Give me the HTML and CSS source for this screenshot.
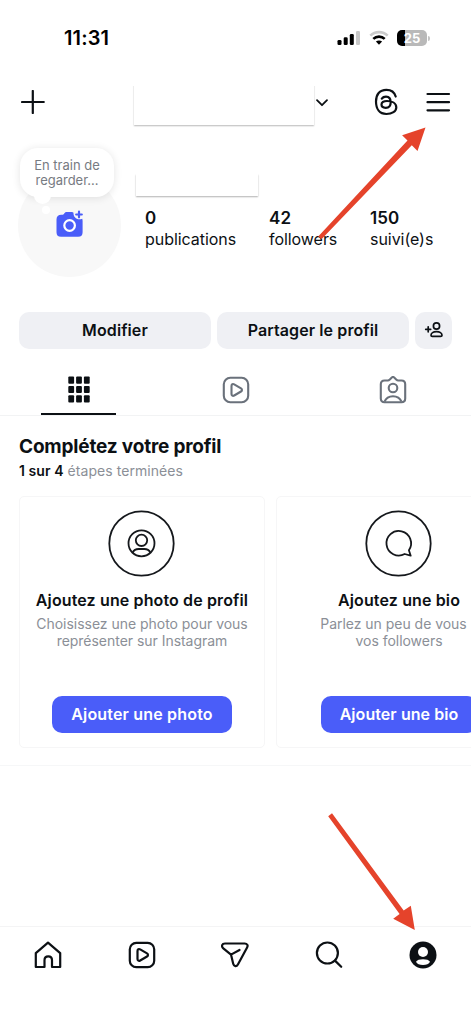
FILE: index.html
```html
<!DOCTYPE html>
<html lang="fr">
<head>
<meta charset="utf-8">
<title>Profil</title>
<link rel="stylesheet" href="styles.css">
</head>
<body>
<div class="screen">
  <div class="status">
    <span class="time">11:31</span>
    <svg class="signal" width="24" height="16" viewBox="0 0 24 16"><rect x="0.5" y="10" width="4" height="5" rx="1.3"/><rect x="6.7" y="7.2" width="4" height="7.8" rx="1.3"/><rect x="12.8" y="4" width="4" height="11" rx="1.3"/><rect x="19" y="1" width="4" height="14" rx="1.3" fill="#c8c8c8"/></svg>
    <svg class="wifi" width="20" height="16" viewBox="0 0 20 16" fill="none" stroke-width="2.6"><path d="M1.3 5.6C6.2.9 13.8.9 18.7 5.6" stroke="#cbcbcb"/><path d="M4.3 8.9c3.2-3.1 8.2-3.1 11.4 0" stroke="#000"/><path d="M6.9 11.6c1.7-1.6 4.5-1.6 6.2 0L10 14.8z" fill="#000"/></svg>
    <div class="battery"><span>25</span></div><i class="battery-tip"></i>
  </div>

  <header class="topbar">
    <svg class="plus" width="24" height="24" viewBox="0 0 24 24" fill="none" stroke="#0c1014" stroke-width="2.2" stroke-linecap="round"><path d="M11.800 1v22M1 12h21.800"/></svg>
    <div class="account"></div>
    <svg class="chevron" width="14" height="10" viewBox="0 0 14 10" fill="none" stroke="#0c1014" stroke-width="1.8" stroke-linecap="round" stroke-linejoin="round"><path d="M2 2.2l5 5 5-5"/></svg>
    <svg class="threads" width="24" height="28" viewBox="0 0 24 28" fill="none" stroke="#0c1014" stroke-width="2.2" stroke-linecap="round"><path d="M21.7 8.5C20.4 4 17.2 1.8 12.4 1.8 5.6 1.8 2 6.2 2 13.6S5.600 26 12.400 26c5.700 0 9.900-2.800 9.900-6.500 0-4.300-4.300-6.500-9.300-6.500-3.600 0-5.500 1.500-5.500 3.600 0 2 1.700 3.200 4.200 3.200 3.500 0 5-2.300 5-5.600 0-3.500-1.500-5.600-4.700-5.600-1.900 0-3.300.7-4.200 2"/></svg>
    <svg class="menu" width="26" height="22" viewBox="0 0 26 22" stroke="#0c1014" stroke-width="2.200" stroke-linecap="round"><path d="M2.500 3h21.500M2.500 11.200h21.500M2.500 19.300h21.500"/></svg>
  </header>

  <section class="profile">
    <div class="avatar">
      <svg class="camera" width="28" height="28" viewBox="0 0 28 28"><path fill="#4a5df9" d="M5.300 4.700h1.400c.8 0 1.200-.4 1.500-1.100C8.700 2.500 9.500 2 10.700 2h5.100c.8 0 1.300.2 1.700.7-.3 3.600 2.300 6.500 6 6.600.9 0 1.800-.1 2.700-.5.300.6.400 1.300.4 2.100v11.300c0 3-1.500 4.500-4.500 4.500H5c-3 0-4.500-1.500-4.500-4.500V9.400c0-3.100 1.700-4.700 4.800-4.700z"/><circle cx="13.600" cy="15.500" r="5.300" fill="none" stroke="#fff" stroke-width="2.200"/><path d="M23 1.700v5.600M20.200 4.500h5.600" stroke="#4a5df9" stroke-width="2.200" stroke-linecap="round"/></svg>
      <div class="note">En train de<br>regarder...</div>
    </div>
    <div class="details">
      <div class="name"></div>
      <div class="stats">
        <div class="stat"><b>0</b><span>publications</span></div>
        <div class="stat"><b>42</b><span>followers</span></div>
        <div class="stat"><b>150</b><span>suivi(e)s</span></div>
      </div>
    </div>
  </section>

  <div class="actions">
    <div class="btn edit">Modifier</div>
    <div class="btn share">Partager le profil</div>
    <div class="btn add"><svg width="20" height="18" viewBox="0 0 20 18" fill="none" stroke="#0c1014" stroke-width="1.700" stroke-linecap="round"><circle cx="12.500" cy="5" r="3.100"/><path d="M12.500 10.700c-3.300 0-5.500 1.400-5.500 3.500 0 .8.500 1.200 1.300 1.200h8.400c.8 0 1.300-.4 1.300-1.200 0-2.100-2.200-3.500-5.500-3.500zM4.200 5.800v5M1.700 8.300h5"/></svg></div>
  </div>

  <nav class="tabs">
    <div class="tab active"><svg width="22" height="27" viewBox="0 0 22 27" fill="#0c1014"><g id="row"><rect x=".3" y=".5" width="5.800" height="7.200" rx="1"/><rect x="8.100" y=".5" width="5.800" height="7.200" rx="1"/><rect x="15.900" y=".5" width="5.800" height="7.200" rx="1"/></g><use href="#row" y="9.400"/><use href="#row" y="18.800"/></svg></div>
    <div class="tab"><svg width="28" height="28" viewBox="0 0 28 28" fill="none" stroke="#6a717b" stroke-width="2.100" stroke-linejoin="round"><rect x="1.800" y="1.800" width="24.400" height="24.400" rx="6.500"/><path d="M9.500 10c0-1.700 1.300-2.400 2.700-1.600l6.800 4c1.300.8 1.300 2.300 0 3.100l-6.800 4c-1.400.8-2.700.1-2.700-1.500z"/></svg></div>
    <div class="tab"><svg width="28" height="28" viewBox="0 0 28 28" fill="none" stroke="#6a717b" stroke-width="2.100" stroke-linejoin="round"><path d="M5.500 4.500h3.300c.8 0 1.300-.2 1.800-.8l2.200-2.100c.7-.7 1.700-.7 2.400 0l2.200 2.100c.5.600 1 .8 1.800.8h3.300c2.400 0 3.700 1.300 3.700 3.700v14.300c0 2.400-1.300 3.700-3.700 3.700h-17c-2.400 0-3.700-1.300-3.700-3.700V8.200c0-2.400 1.300-3.700 3.700-3.700z"/><circle cx="14" cy="12" r="4.300"/><path d="M5.500 25.600c1.500-3.600 4.600-5.400 8.500-5.400s7 1.800 8.500 5.400"/></svg></div>
  </nav>

  <section class="complete">
    <h2>Complétez votre profil</h2>
    <p class="progress"><b>1 sur 4</b> <span>étapes terminées</span></p>
    <div class="cards">
      <article class="card">
        <svg class="round" width="67" height="67" viewBox="0 0 67 67" fill="none" stroke="#15181c" stroke-width="1.800"><circle cx="33.500" cy="33.500" r="32.200"/><circle cx="33.500" cy="33.300" r="13"/><circle cx="33.500" cy="30.300" r="5.700"/><path d="M24.600 42.600c1.200-2.500 3.300-3.600 6.100-3.600h5.600c2.800 0 4.900 1.100 6.100 3.600"/></svg>
        <h3 class="title photo-title">Ajoutez une photo de profil</h3>
        <p class="desc">Choisissez une photo pour vous<br>représenter sur Instagram</p>
        <div class="cta photo-cta">Ajouter une photo</div>
      </article>
      <article class="card">
        <svg class="round" width="67" height="67" viewBox="0 0 67 67" fill="none" stroke="#15181c" stroke-width="1.800" stroke-linejoin="round"><circle cx="33.500" cy="33.500" r="32.200"/><path d="M43.900 40.200a12.300 12.300 0 1 0-4.200 3.800l6 1.700z"/></svg>
        <h3 class="title">Ajoutez une bio</h3>
        <p class="desc"><span class="line">Parlez un peu de vous</span>vos followers</p>
        <div class="cta">Ajouter une bio</div>
      </article>
    </div>
  </section>

  <nav class="bottom">
    <div><svg width="28" height="28" viewBox="0 0 28 28" fill="none" stroke="#0c1014" stroke-width="2.200" stroke-linejoin="round"><path d="M1.800 12.200L14 1.600l12.200 10.600V26H18v-6.700c0-5.200-7.500-5.200-7.500 0V26H1.800z"/></svg></div>
    <div><svg width="28" height="28" viewBox="0 0 28 28" fill="none" stroke="#0c1014" stroke-width="2.200" stroke-linejoin="round"><rect x="1.800" y="1.800" width="24.400" height="24.400" rx="6.500"/><path d="M9.500 10c0-1.700 1.300-2.400 2.700-1.600l6.800 4c1.300.8 1.300 2.300 0 3.100l-6.800 4c-1.400.8-2.700.1-2.700-1.500z"/></svg></div>
    <div><svg width="28" height="28" viewBox="0 0 28 28" fill="none" stroke="#0c1014" stroke-width="2.200" stroke-linejoin="round" stroke-linecap="round"><path d="M4 2.500h19.700c2.500 0 3.600 1.900 2.400 4l-9.200 17c-1.400 2.400-4 2.100-4.700-.7L10 13.600 2.300 7.300C0 5.400 1 2.500 4 2.500zM10 13.600l8.500-4.600"/></svg></div>
    <div><svg width="28" height="28" viewBox="0 0 28 28" fill="none" stroke="#0c1014" stroke-width="2.200" stroke-linecap="round"><circle cx="12.400" cy="12" r="10.500"/><path d="M20 19.600l6.200 6.200"/></svg></div>
    <div><svg width="28" height="28" viewBox="0 0 28 28"><circle cx="14" cy="14" r="13.500" fill="#0c1014"/><circle cx="14" cy="11" r="5" fill="#fff"/><path fill="#fff" d="M7 20.700c1-1.700 3.500-2.500 7-2.500s6 .8 7 2.500c-1 2.400-3.600 3.300-7 3.300s-6-.9-7-3.300z"/></svg></div>
  </nav>

  <svg class="arrows" width="471" height="1024" viewBox="0 0 471 1024" fill="#e5432b"><path d="M318.200 236.500L407.500 140.500 402.100 135.200 425.500 127.500 417.500 151 411.800 145.300 321.700 239z"/><path d="M332 813.200L403.700 910.600 410.800 905.700 414.800 930 393.200 918.800 399.600 913.900 328.200 816.200z"/></svg>
</div>
</body>
</html>
```

FILE: styles.css
```css
* { box-sizing: border-box; }
body { margin: 0; background: #fff; color: #0c1014; font-family: Inter, "Noto Sans", sans-serif; }
h2, h3, p { margin: 0; }
svg { display: block; flex: none; }
.screen { position: relative; width: 471px; height: 1024px; overflow: hidden; display: flex; flex-direction: column; }

.status { height: 76px; flex: none; display: flex; align-items: center; padding-left: 64px; }
.time { width: 273px; font-size: 20px; font-weight: 600; color: #000; letter-spacing: .15px; }
.wifi { margin-left: 8px; }
.battery { margin-left: 8px; width: 30px; height: 16px; border-radius: 5px; background: linear-gradient(90deg, #000 8px, #b9b9b9 8px); color: #fff; font-size: 13px; font-weight: 700; line-height: 16px; text-align: center; letter-spacing: .1px; }
.battery-tip { width: 2px; height: 5px; margin-left: 1px; border-radius: 0 2px 2px 0; background: #c4c4c4; }

.topbar { height: 52px; flex: none; display: flex; align-items: center; padding-left: 21px; }
.account { width: 180px; height: 41px; margin: 5px 0 0 89px; background: #fff; box-shadow: 0 1px 1.500px rgba(0,0,0,.28); clip-path: inset(2px -2px -4px -2px); }
.chevron { margin: 1px 0 0 1px; }
.threads { margin-left: 45px; }
.menu { margin-left: 27px; }

.profile { height: 184px; flex: none; display: flex; padding: 46px 0 0 18px; }
.avatar { position: relative; width: 103px; height: 103px; border-radius: 50%; background: #f8f8f8; }
.camera { margin: 36px 0 0 38px; }
.note { position: absolute; left: 2px; top: -26px; width: 94px; height: 49px; border-radius: 18px; background: #fff; box-shadow: 0 1px 8px rgba(0,0,0,.11); padding-top: 10px; text-align: center; font-size: 13px; line-height: 15px; color: #777b82; }
.note::before { content: ""; position: absolute; left: 14px; top: 39px; width: 17px; height: 17px; border-radius: 50%; background: #fff; clip-path: inset(9px 0 0 0); }
.note::after { content: ""; position: absolute; left: 22px; top: 58px; width: 8px; height: 8px; border-radius: 50%; background: #fff; }
.details { margin-left: 15px; }
.name { width: 122px; height: 22px; background: #fff; box-shadow: 0 1px 1.500px rgba(0,0,0,.3); clip-path: inset(0 -2px -4px -2px); }
.stats { display: flex; padding: 12px 0 0 9px; }
.stat { display: flex; flex-direction: column; font-size: 16px; line-height: 21px; letter-spacing: -.05px; }
.stat:nth-child(1) { width: 124px; }
.stat:nth-child(2) { width: 101px; }
.stat b { font-size: 17px; font-weight: 600; letter-spacing: .1px; }

.actions { display: flex; gap: 6px; padding-left: 19px; flex: none; }
.btn { height: 37px; border-radius: 10px; background: #eff0f4; display: flex; align-items: center; justify-content: center; padding-bottom: 1px; font-size: 16px; font-weight: 600; letter-spacing: .1px; }
.edit, .share { width: 192px; }
.add { width: 37px; }

.tabs { height: 67px; flex: none; display: flex; border-bottom: 1px solid #f2f3f4; }
.tab { flex: 1; position: relative; display: flex; justify-content: center; align-items: center; padding-top: 15px; }
.active::after { content: ""; position: absolute; left: 41px; bottom: 0; width: 75px; height: 2px; background: #0c1014; }

.complete { height: 350px; flex: none; padding: 18px 0 0 19px; border-bottom: 1px solid #f6f7f8; }
.complete h2 { font-size: 19px; line-height: 25px; font-weight: 700; letter-spacing: -.18px; white-space: nowrap; }
.progress { font-size: 14px; line-height: 20px; margin-top: 2px; color: #8b8f97; letter-spacing: .06px; }
.progress b { color: #0c1014; font-weight: 600; }
.cards { display: flex; gap: 11px; margin-top: 15px; }
.card { width: 246px; height: 252px; flex: none; border: 1px solid #f6f6f7; border-radius: 5px; padding-top: 13px; display: flex; flex-direction: column; align-items: center; }
.round { margin-right: 1px; }
.title { font-size: 16px; line-height: 20px; font-weight: 600; margin-top: 13px; letter-spacing: .13px; white-space: nowrap; }
.desc { height: 33px; font-size: 14px; line-height: 16.500px; margin-top: 6px; color: #8b8f97; text-align: center; letter-spacing: -.03px; white-space: nowrap; }
.line { display: block; padding-right: 11px; }
.cta { height: 37px; margin-top: 47px; padding: 0 19px; border-radius: 10px; background: #4a5df9; color: #fff; font-size: 16px; font-weight: 600; line-height: 37px; letter-spacing: .07px; white-space: nowrap; }
.photo-cta { letter-spacing: .17px; }

.bottom { margin-top: 160px; height: 98px; flex: none; border-top: 1px solid #f4f4f5; display: flex; align-items: flex-start; padding: 14px 1px 0 1px; }
.bottom div { flex: 1; display: flex; justify-content: center; }
.arrows { position: absolute; left: 0; top: 0; }
```
